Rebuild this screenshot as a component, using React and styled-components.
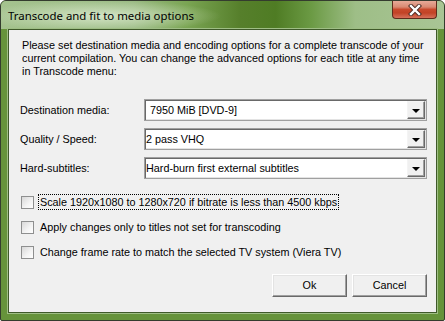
import React from 'react';
import styled, {createGlobalStyle} from 'styled-components';

const Global = createGlobalStyle`
    html, body {
        margin: 0;
        background: #ffffff;
    }
`;

const Window = styled.div`
    width: 445px;
    height: 321px;
    box-sizing: border-box;
    border: 1px solid #343c2e;
    border-radius: 6px 6px 2px 2px;
    background: #66933b;
    display: flex;
    flex-direction: column;
    overflow: hidden;
`;

const TitleBar = styled.div`
    height: 28px;
    flex: none;
    display: flex;
    align-items: flex-start;
    justify-content: space-between;
    background:
        radial-gradient(ellipse 120px 16px at 100px 15px, rgba(214, 230, 200, 0.95), rgba(214, 230, 200, 0) 100%),
        linear-gradient(to right, #a5c38f 0%, #98b981 30%, #7aa553 42%, #567f2b 54%, #4f7c24 62%, #6b9a44 70%, #9ebe87 80%, #a9c595 100%);
`;

const Title = styled.span`
    margin: 7px 0 0 7px;
    font-family: "Noto Sans", "Open Sans", sans-serif;
    font-size: 11.4px;
    line-height: 15px;
    color: #000;
`;

const CloseButton = styled.div`
    width: 45px;
    height: 18px;
    margin-right: 7px;
    box-sizing: border-box;
    border: 1px solid #5e2c1c;
    border-top: none;
    border-radius: 0 0 4px 4px;
    background: linear-gradient(to bottom, #e7aa98 0%, #d98a73 35%, #c8492c 50%, #c24326 70%, #d6705a 100%);
    display: flex;
    align-items: center;
    justify-content: center;
`;

const Client = styled.div`
    flex: 1;
    margin: 0 7px 7px;
    border: 1px solid #3f5a2a;
    box-shadow: 0 0 0 1px #9fbe85;
    background: #f0f0f0;
    padding: 0 9px 0 11px;
    font-family: "Liberation Sans", Arial, sans-serif;
    font-size: 10.8px;
    color: #000;
    display: flex;
    flex-direction: column;
`;

const Intro = styled.p`
    margin: 9px 0 0 2px;
    line-height: 13px;
    white-space: nowrap;
`;

const Form = styled.div`
    margin-top: 21px;
    display: grid;
    grid-template-columns: 124px 283px;
    grid-auto-rows: 22px;
    row-gap: 7px;
    align-items: center;
`;

const Label = styled.label`
    line-height: 13px;
`;

const Combo = styled.div`
    height: 22px;
    box-sizing: border-box;
    border: 1px solid #a0a0a0;
    box-shadow: inset 1px 1px 0 #696969, inset -1px -1px 0 #e3e3e3;
    background: #fff;
    display: flex;
    align-items: center;
    justify-content: space-between;
    padding: 0 1px 0 ${p => p.$inset}px;
`;

const ComboText = styled.span`
    line-height: 13px;
`;

const DropButton = styled.div`
    width: 18px;
    height: 18px;
    box-sizing: border-box;
    border: 1px solid;
    border-color: #f4f4f4 #696969 #696969 #f4f4f4;
    box-shadow: inset -1px -1px 0 #a0a0a0;
    background: #f0f0f0;
    display: flex;
    align-items: center;
    justify-content: center;
`;

const Arrow = styled.span`
    width: 0;
    height: 0;
    border-left: 4px solid transparent;
    border-right: 4px solid transparent;
    border-top: 4px solid #000;
    margin-top: 1px;
`;

const Checks = styled.div`
    margin-top: 15px;
    display: flex;
    flex-direction: column;
    gap: 9px;
`;

const CheckRow = styled.div`
    height: 16px;
    display: flex;
    align-items: center;
    padding-left: 1px;
`;

const Box = styled.span`
    width: 13px;
    height: 13px;
    box-sizing: border-box;
    border: 1px solid #8e8f8f;
    background: linear-gradient(135deg, #d8d8d8 0%, #f4f4f4 60%, #ffffff 100%);
    margin-right: 4px;
    flex: none;
`;

const CheckLabel = styled.span`
    line-height: 14px;
    padding: 0 1px;
    border: 1px dotted ${p => (p.$focused ? '#000' : 'transparent')};
`;

const Buttons = styled.div`
    margin-top: 14px;
    display: flex;
    justify-content: flex-end;
    gap: 5px;
`;

const Button = styled.div`
    width: 75px;
    height: 23px;
    box-sizing: border-box;
    border: 1px solid;
    border-color: #ffffff #696969 #696969 #ffffff;
    box-shadow: inset -1px -1px 0 #a0a0a0, inset 1px 1px 0 #e3e3e3;
    background: #f0f0f0;
    display: flex;
    align-items: center;
    justify-content: center;
    line-height: 13px;
`;

const CloseIcon = () => (
    <svg width="14" height="12" viewBox="0 0 14 12">
        <path d="M3 2 L11 10 M11 2 L3 10" stroke="#4a2a22" strokeWidth="4.2" strokeLinecap="square" />
        <path d="M3 2 L11 10 M11 2 L3 10" stroke="#ffffff" strokeWidth="2.4" strokeLinecap="square" />
    </svg>
);

const fields = [
    {label: 'Destination media:', value: '7950 MiB [DVD-9]', inset: 5},
    {label: 'Quality / Speed:', value: '2 pass VHQ', inset: 1},
    {label: 'Hard-subtitles:', value: 'Hard-burn first external subtitles', inset: 1},
];

const options = [
    'Scale 1920x1080 to 1280x720 if bitrate is less than 4500 kbps',
    'Apply changes only to titles not set for transcoding',
    'Change frame rate to match the selected TV system (Viera TV)',
];

export default function App() {
    return (
        <>
            <Global />
            <Window>
                <TitleBar>
                    <Title>Transcode and fit to media options</Title>
                    <CloseButton><CloseIcon /></CloseButton>
                </TitleBar>
                <Client>
                    <Intro>
                        Please set destination media and encoding options for a complete transcode of your<br />
                        current compilation. You can change the advanced options for each title at any time<br />
                        in Transcode menu:
                    </Intro>
                    <Form>
                        {fields.map(f => (
                            <React.Fragment key={f.label}>
                                <Label>{f.label}</Label>
                                <Combo $inset={f.inset}>
                                    <ComboText>{f.value}</ComboText>
                                    <DropButton><Arrow /></DropButton>
                                </Combo>
                            </React.Fragment>
                        ))}
                    </Form>
                    <Checks>
                        {options.map((o, i) => (
                            <CheckRow key={o}>
                                <Box />
                                <CheckLabel $focused={i === 0}>{o}</CheckLabel>
                            </CheckRow>
                        ))}
                    </Checks>
                    <Buttons>
                        <Button>Ok</Button>
                        <Button>Cancel</Button>
                    </Buttons>
                </Client>
            </Window>
        </>
    );
}
